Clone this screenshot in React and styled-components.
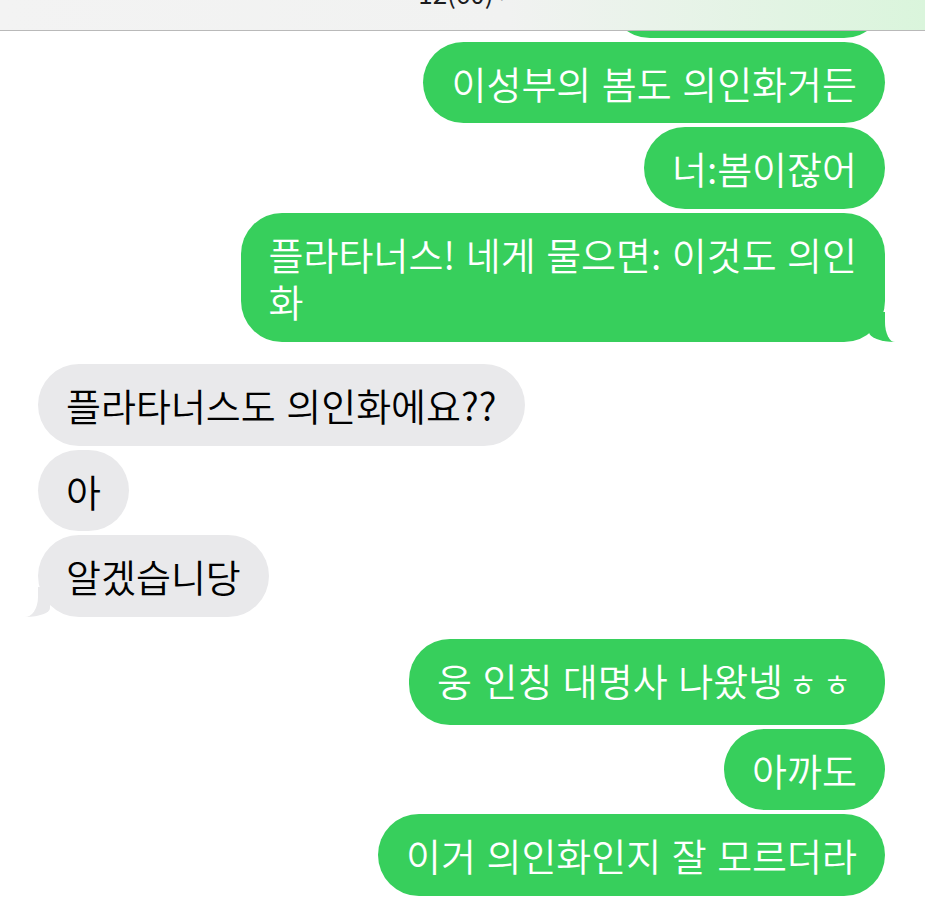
import React from "react";
import styled, { createGlobalStyle, css } from "styled-components";

const GlobalStyle = createGlobalStyle`
  html, body {
    margin: 0;
    padding: 0;
    background: #ffffff;
  }
  body {
    width: 925px;
    height: 900px;
    overflow: hidden;
    font-family: "Noto Sans CJK KR", "Noto Sans", sans-serif;
  }
`;

const Screen = styled.div`
  display: flex;
  flex-direction: column;
  width: 925px;
  height: 900px;
  overflow: hidden;
  background: #ffffff;
`;

const Header = styled.header`
  flex: 0 0 30px;
  display: flex;
  justify-content: center;
  align-items: flex-start;
  overflow: hidden;
  border-bottom: 1px solid #b9b9b9;
  background: linear-gradient(90deg, #f3f3f3 0%, #f1f2f1 55%, #daf5dc 100%);
`;

const Title = styled.div`
  margin-top: -21px;
  font-size: 26px;
  line-height: 28px;
  color: #1c1c1e;
  display: flex;
  align-items: center;
  gap: 6px;
`;

const Chevron = styled.span`
  color: #9a9a9e;
  font-size: 24px;
`;

const Thread = styled.main`
  flex: 1;
  overflow: hidden;
  padding: 0 40px 0 38px;
`;

const Scroll = styled.div`
  margin-top: -75px;
  display: flex;
  flex-direction: column;
  gap: 22.5px;
`;

const Group = styled.section`
  display: flex;
  flex-direction: column;
  align-items: ${(p) => (p.$sent ? "flex-end" : "flex-start")};
  gap: 4px;
`;

const GREEN = "#37cf5c";
const GRAY = "#e9e9eb";

const sentTail = css`
  &::before {
    content: "";
    position: absolute;
    bottom: 0;
    right: -12px;
    width: 28px;
    height: 30px;
    background: ${GREEN};
    border-bottom-left-radius: 26px 10px;
  }
  &::after {
    content: "";
    position: absolute;
    bottom: 0;
    right: -42px;
    width: 42px;
    height: 30px;
    background: #ffffff;
    border-bottom-left-radius: 10px 20px;
  }
`;

const receivedTail = css`
  &::before {
    content: "";
    position: absolute;
    bottom: 0;
    left: -13px;
    width: 25px;
    height: 30px;
    background: ${GRAY};
    border-bottom-right-radius: 24px 9px;
  }
  &::after {
    content: "";
    position: absolute;
    bottom: 0;
    left: -42px;
    width: 42px;
    height: 30px;
    background: #ffffff;
    border-bottom-right-radius: 13px 20px;
  }
`;

const Bubble = styled.div`
  position: relative;
  max-width: 650px;
  box-sizing: border-box;
  padding: 17px 28px;
  border-radius: 41px;
  background: ${(p) => (p.$sent ? GREEN : GRAY)};
  color: ${(p) => (p.$sent ? "#ffffff" : "#000000")};
  font-size: 38px;
  line-height: 47.5px;
  font-weight: 350;
  word-spacing: 2px;
  white-space: nowrap;
  ${(p) => p.$tail && (p.$sent ? sentTail : receivedTail)}
`;

const Text = styled.span`
  position: relative;
  z-index: 1;
`;

const Jamo = styled.span`
  font-size: 0.8em;
  letter-spacing: 6px;
  margin-left: 6px;
`;

const App = () => {
  return (
    <>
      <GlobalStyle />
      <Screen>
        <Header>
          <Title>
            12(60)
            <Chevron>›</Chevron>
          </Title>
        </Header>
        <Thread>
          <Scroll>
            <Group $sent>
              <Bubble $sent>
                <Text>그건 의인화야</Text>
              </Bubble>
              <Bubble $sent>
                <Text>이성부의 봄도 의인화거든</Text>
              </Bubble>
              <Bubble $sent>
                <Text>너:봄이잖어</Text>
              </Bubble>
              <Bubble $sent $tail>
                <Text>
                  플라타너스! 네게 물으면: 이것도 의인
                  <br />화
                </Text>
              </Bubble>
            </Group>
            <Group>
              <Bubble>
                <Text>플라타너스도 의인화에요??</Text>
              </Bubble>
              <Bubble>
                <Text>아</Text>
              </Bubble>
              <Bubble $tail>
                <Text>알겠습니당</Text>
              </Bubble>
            </Group>
            <Group $sent>
              <Bubble $sent>
                <Text>
                  웅 인칭 대명사 나왔넹<Jamo>ㅎㅎ</Jamo>
                </Text>
              </Bubble>
              <Bubble $sent>
                <Text>아까도</Text>
              </Bubble>
              <Bubble $sent>
                <Text>이거 의인화인지 잘 모르더라</Text>
              </Bubble>
              <Bubble $sent>
                <Text>그래서 물어봤지</Text>
              </Bubble>
            </Group>
          </Scroll>
        </Thread>
      </Screen>
    </>
  );
};

export default App;
